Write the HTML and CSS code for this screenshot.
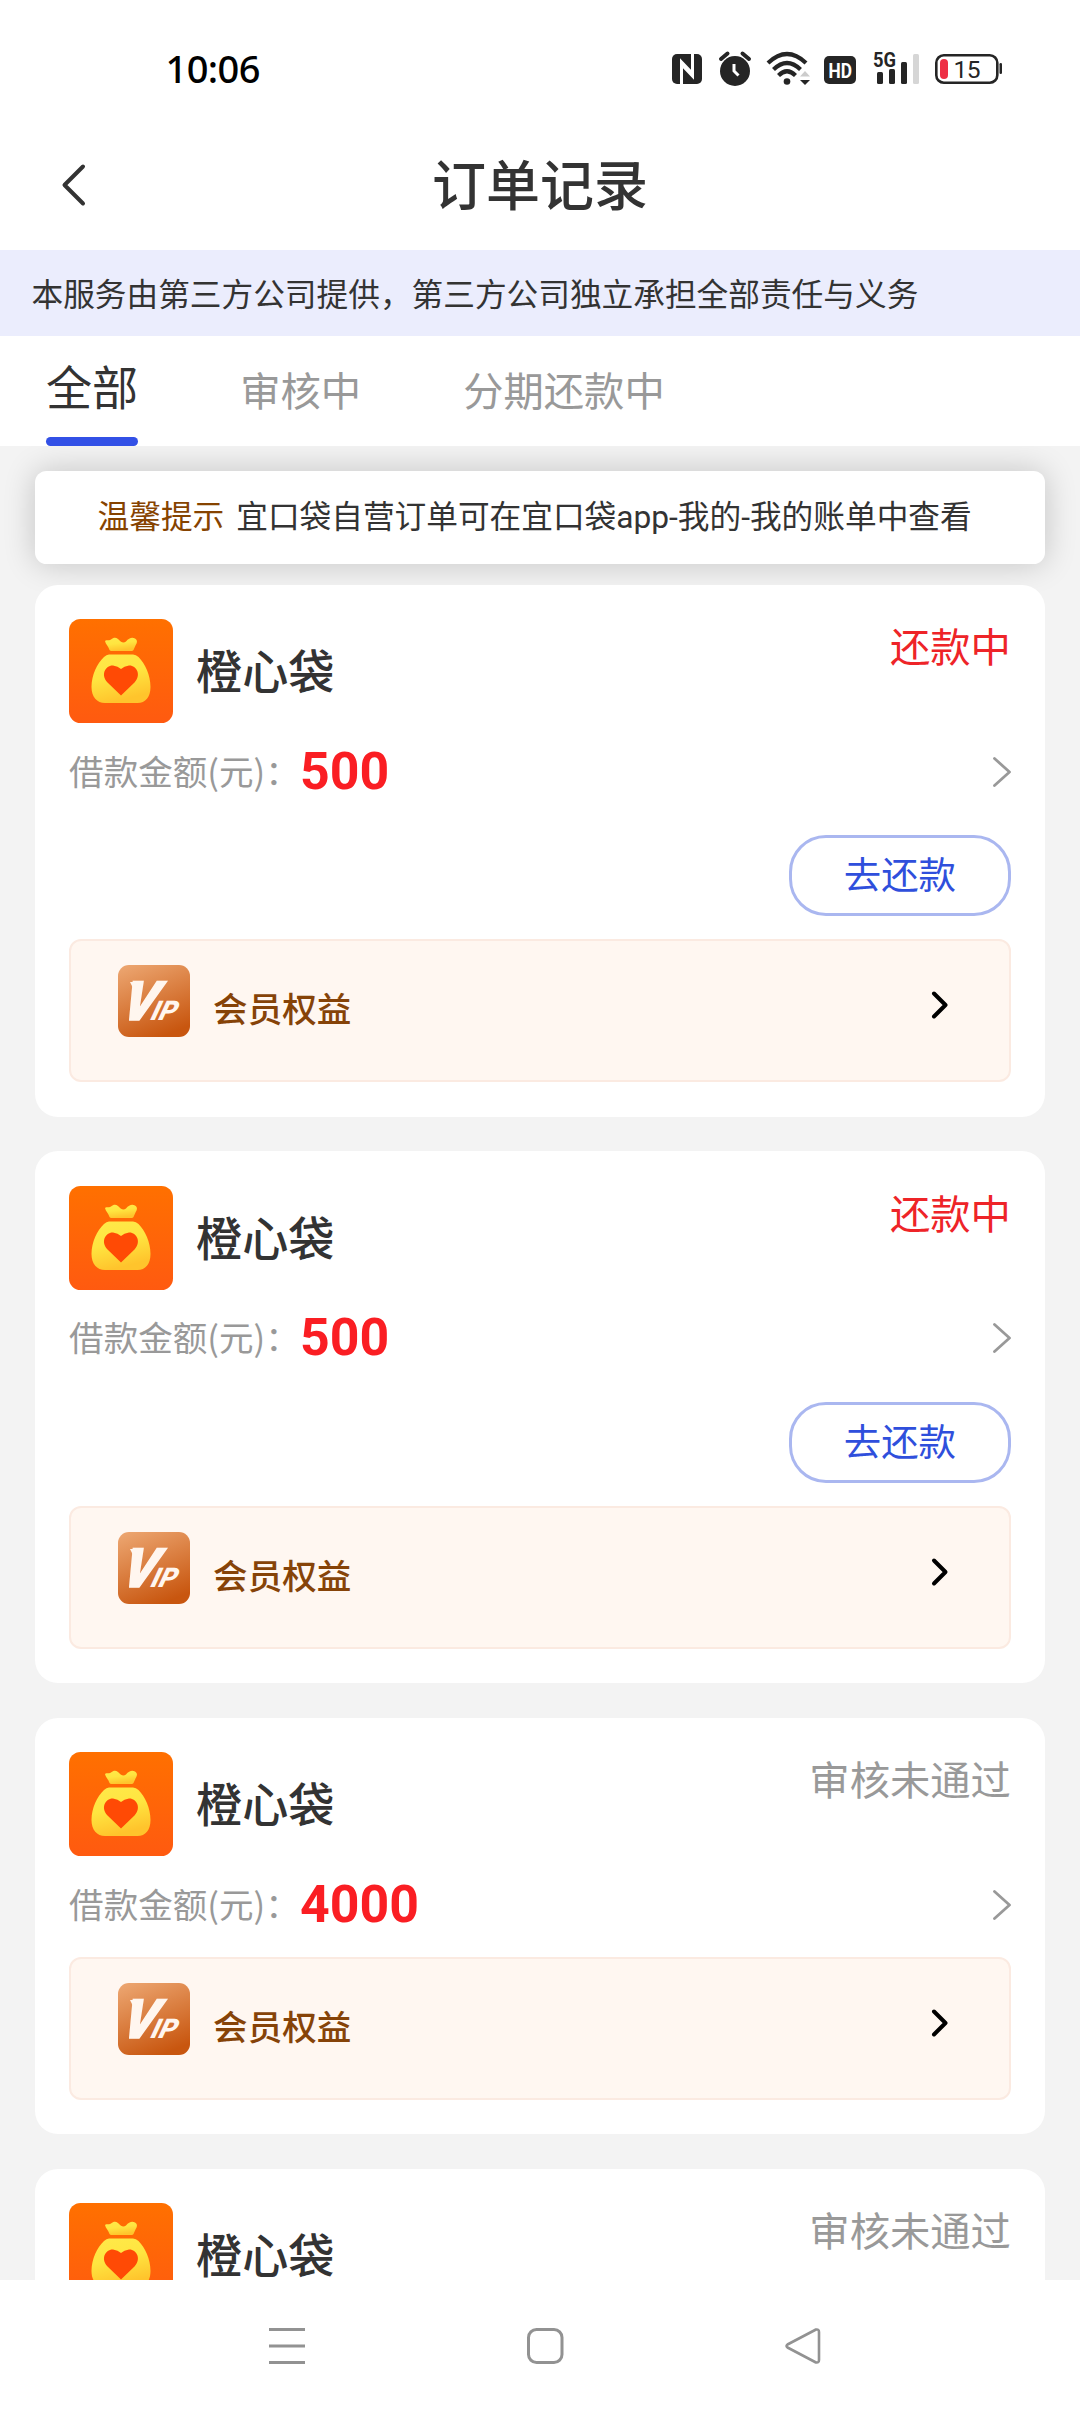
FILE: index.html
```html
<!DOCTYPE html>
<html lang="zh">
<head>
    <meta charset="UTF-8">
    <title>订单记录</title>
    <link rel="stylesheet" href="styles.css">
</head>
<body>
    <svg class="defs" width="0" height="0">
        <defs>
            <linearGradient id="orange" x1="0" y1="0" x2="0" y2="1">
                <stop offset="0" stop-color="#ff7000"/>
                <stop offset="1" stop-color="#ff5a10"/>
            </linearGradient>
            <linearGradient id="gold" x1="0" y1="0" x2="0.3" y2="1">
                <stop offset="0" stop-color="#ffe94a"/>
                <stop offset="0.5" stop-color="#ffe540"/>
                <stop offset="1" stop-color="#ffc42c"/>
            </linearGradient>
            <linearGradient id="bronze" x1="0.2" y1="0" x2="0.6" y2="1">
                <stop offset="0" stop-color="#eba36d"/>
                <stop offset="1" stop-color="#c8560f"/>
            </linearGradient>
        </defs>
        <symbol id="bag" viewBox="0 0 104 104">
            <rect width="104" height="104" rx="11.5" fill="url(#orange)"/>
            <path d="M36 22C38 20.500 39 22 42 20.500C44.500 18.500 46.500 18 49 20C51.500 22.500 54 25 57 22.500C60 19 63 18 66 19.500C69 21.500 68 24 66.500 26.500L64.500 31Q64 32 62.500 32H42.500Q41 32 40.500 31C39.500 27.500 36.500 25 36 22Z" fill="url(#gold)"/>
            <path d="M40 35.500H64Q67 35.500 69.500 38C76 44.500 81.500 56 81.500 68C81.500 78 76.500 84 68.500 84H36C28 84 22.500 78 22.500 68C22.500 56 28 44.500 35 38Q37.500 35.500 40 35.500Z" fill="url(#gold)"/>
            <path d="M52 76.500L38.500 63.500C31 55.500 37 46 44 46.500Q49 47 52 50Q55 47 60 46.500C67 46 73 55.500 65.500 63.500Z" fill="#ff4a05"/>
        </symbol>
        <symbol id="vip" viewBox="0 0 72 72">
            <rect width="72" height="72" rx="11" fill="url(#bronze)"/>
            <path d="M12 17H22V22H14.500Z" fill="#fff6ef"/>
            <text class="vip-v" transform="translate(0 55) skewX(-22)" textLength="33" lengthAdjust="spacingAndGlyphs">V</text>
            <text class="vip-ip" transform="translate(30.500 55) skewX(-25)" textLength="25" lengthAdjust="spacingAndGlyphs">IP</text>
        </symbol>
        <symbol id="more" viewBox="0 0 20 34">
            <path d="M3.500 3.500L18.500 17L3.500 30.500" fill="none" stroke="#999" stroke-width="2.800" stroke-linecap="round" stroke-linejoin="round"/>
        </symbol>
        <symbol id="enter" viewBox="0 0 20 30">
            <path d="M3 3.500L14.500 15L3 26.500" fill="none" stroke="#000" stroke-width="4" stroke-linecap="round" stroke-linejoin="round"/>
        </symbol>
    </svg>

    <div class="status-bar">
        <div class="time">10:06</div>
        <div class="status-icons">
            <svg class="nfc" width="30" height="36" viewBox="0 0 30 36">
                <rect y="4" width="30" height="30" rx="5" fill="#252525"/>
                <path d="M9.500 34V12L21 24" fill="none" stroke="#fff" stroke-width="3"/>
                <path d="M20.500 4V26L9 14" fill="none" stroke="#fff" stroke-width="3"/>
            </svg>
            <svg class="alarm" width="34" height="36" viewBox="0 0 34 36">
                <circle cx="17" cy="21" r="15" fill="#252525"/>
                <path d="M3 9L9.500 3.500M31 9L24.500 3.500" stroke="#252525" stroke-width="4" stroke-linecap="round"/>
                <path d="M16 14V21L20.500 25.500" fill="none" stroke="#fff" stroke-width="3"/>
            </svg>
            <svg class="wifi" width="46" height="36" viewBox="0 0 46 36">
                <g fill="none" stroke="#252525" stroke-width="4.200">
                    <path d="M2 13Q21 -5 40 13"/>
                    <path d="M7.500 19.500Q21 6.500 34.500 19.500"/>
                    <path d="M12.500 25.500Q21 17 29.500 25.500"/>
                </g>
                <circle cx="21" cy="31.500" r="3.300" fill="#252525"/>
                <path d="M34 26.500L39 21L44 26.500Z" fill="#ccc"/>
                <path d="M34 30L39 35L44 30Z" fill="#252525"/>
            </svg>
            <svg class="hd" width="32" height="36" viewBox="0 0 32 36">
                <rect y="6" width="32" height="28" rx="5" fill="#252525"/>
                <text class="hd-text" x="4.500" y="27.500" textLength="23.500" lengthAdjust="spacingAndGlyphs">HD</text>
            </svg>
            <svg class="signal" width="48" height="36" viewBox="0 0 48 36">
                <text class="net-text" x="0" y="17" textLength="23" lengthAdjust="spacingAndGlyphs">5G</text>
                <rect x="4" y="22" width="6" height="12" rx="1.500" fill="#252525"/>
                <rect x="16" y="19" width="6" height="15" rx="1.500" fill="#252525"/>
                <rect x="28" y="12" width="6" height="22" rx="1.500" fill="#252525"/>
                <rect x="40" y="4" width="6" height="30" rx="1.500" fill="#d6d6d6"/>
            </svg>
            <svg class="battery" width="68" height="36" viewBox="0 0 68 36">
                <rect x="1.300" y="5.300" width="61" height="27.400" rx="7.500" fill="none" stroke="#252525" stroke-width="2.600"/>
                <rect x="5" y="9" width="8" height="20" rx="4" fill="#ee2f45"/>
                <rect x="64.500" y="13" width="2.500" height="11" rx="1.200" fill="#252525"/>
                <text class="battery-text" x="18.500" y="27.500" textLength="27" lengthAdjust="spacing">15</text>
            </svg>
        </div>
    </div>

    <div class="header">
        <svg class="back" width="28" height="48" viewBox="0 0 28 48">
            <path d="M23 5.500L4.500 24L23 42.500" fill="none" stroke="#333" stroke-width="4" stroke-linecap="round" stroke-linejoin="round"/>
        </svg>
        <h1>订单记录</h1>
    </div>

    <div class="notice">本服务由第三方公司提供，第三方公司独立承担全部责任与义务</div>

    <div class="tabs">
        <div class="tab active">全部</div>
        <div class="tab">审核中</div>
        <div class="tab">分期还款中</div>
    </div>

    <div class="list">
        <div class="tip"><span class="tip-title">温馨提示</span><span>宜口袋自营订单可在宜口袋app-我的-我的账单中查看</span></div>

        <div class="card">
            <div class="card-head">
                <svg class="logo"><use href="#bag"/></svg>
                <div class="name">橙心袋</div>
                <div class="state repaying">还款中</div>
            </div>
            <div class="amount-row">
                <span class="label">借款金额(元)：</span>
                <span class="amount">500</span>
                <svg class="more"><use href="#more"/></svg>
            </div>
            <div class="actions"><button class="repay-btn">去还款</button></div>
            <div class="vip-row">
                <svg class="vip-icon"><use href="#vip"/></svg>
                <span class="vip-name">会员权益</span>
                <svg class="enter"><use href="#enter"/></svg>
            </div>
        </div>

        <div class="card">
            <div class="card-head">
                <svg class="logo"><use href="#bag"/></svg>
                <div class="name">橙心袋</div>
                <div class="state repaying">还款中</div>
            </div>
            <div class="amount-row">
                <span class="label">借款金额(元)：</span>
                <span class="amount">500</span>
                <svg class="more"><use href="#more"/></svg>
            </div>
            <div class="actions"><button class="repay-btn">去还款</button></div>
            <div class="vip-row">
                <svg class="vip-icon"><use href="#vip"/></svg>
                <span class="vip-name">会员权益</span>
                <svg class="enter"><use href="#enter"/></svg>
            </div>
        </div>

        <div class="card">
            <div class="card-head">
                <svg class="logo"><use href="#bag"/></svg>
                <div class="name">橙心袋</div>
                <div class="state">审核未通过</div>
            </div>
            <div class="amount-row">
                <span class="label">借款金额(元)：</span>
                <span class="amount">4000</span>
                <svg class="more"><use href="#more"/></svg>
            </div>
            <div class="vip-row">
                <svg class="vip-icon"><use href="#vip"/></svg>
                <span class="vip-name">会员权益</span>
                <svg class="enter"><use href="#enter"/></svg>
            </div>
        </div>

        <div class="card">
            <div class="card-head">
                <svg class="logo"><use href="#bag"/></svg>
                <div class="name">橙心袋</div>
                <div class="state">审核未通过</div>
            </div>
        </div>
    </div>

    <div class="nav-bar">
        <svg width="40" height="40" viewBox="0 0 40 40">
            <path d="M2 3.500H38M2 20H38M2 36.500H38" stroke="#929292" stroke-width="3.200"/>
        </svg>
        <svg width="40" height="40" viewBox="0 0 40 40">
            <rect x="3.500" y="3.500" width="33.500" height="33" rx="8" fill="none" stroke="#929292" stroke-width="3"/>
        </svg>
        <svg width="40" height="40" viewBox="0 0 40 40">
            <path d="M33 3.500L4.500 18.500Q2.500 20 4.500 21.500L33 36.500Q36 37 36 34V6Q36 3 33 3.500Z" fill="none" stroke="#929292" stroke-width="2.600" stroke-linejoin="round"/>
        </svg>
    </div>
</body>
</html>
```
FILE: styles.css
```css
* {
    box-sizing: border-box;
}
body {
    margin: 0;
    width: 1080px;
    height: 2412px;
    display: flex;
    flex-direction: column;
    overflow: hidden;
    font-family: "Noto Sans CJK SC", sans-serif;
    background: #fff;
    color: #333;
}
svg {
    display: block;
    flex-shrink: 0;
}
.defs {
    position: absolute;
}

/* 状态栏 */
.status-bar {
    height: 120px;
    flex-shrink: 0;
    display: flex;
    align-items: flex-start;
    justify-content: space-between;
    padding: 50px 77px 0 165.5px;
}
.time {
    font-family: "Noto Sans", sans-serif;
    font-size: 38px;
    font-weight: 500;
    line-height: 37px;
    letter-spacing: -0.6px;
    color: #000;
}
.status-icons {
    display: flex;
}
.alarm {
    margin-left: 16px;
}
.wifi {
    margin-left: 14px;
}
.hd {
    margin-left: 12px;
}
.signal {
    margin-left: 17px;
}
.battery {
    margin-left: 14px;
}
.hd-text {
    font: bold 21px Roboto, sans-serif;
    fill: #fff;
}
.net-text {
    font: bold 21px Roboto, sans-serif;
    fill: #252525;
}
.battery-text {
    font: 24.5px Roboto, sans-serif;
    fill: #252525;
}

/* 标题 */
.header {
    height: 130px;
    flex-shrink: 0;
    display: grid;
    grid-template-columns: 60px 1fr 60px;
    align-items: center;
    padding: 0 60px;
}
.header h1 {
    margin: 0;
    padding-bottom: 5px;
    text-align: center;
    font-size: 54px;
    font-weight: 500;
    line-height: 70px;
}
.notice {
    height: 86px;
    flex-shrink: 0;
    padding-left: 31.5px;
    background: #ebedfd;
    font-size: 31.68px;
    line-height: 84px;
    white-space: nowrap;
}

/* 标签 */
.tabs {
    height: 110px;
    flex-shrink: 0;
    display: flex;
    gap: 102px;
    padding-left: 46px;
}
.tab {
    height: 110px;
    font-size: 40.32px;
    line-height: 105px;
    color: #999;
}
.tab.active {
    font-size: 46.08px;
    line-height: 99px;
    color: #333;
    display: flex;
    flex-direction: column;
}
.tab.active::after {
    content: "";
    height: 9px;
    margin-top: 2px;
    border-radius: 4.5px;
    background: #3250e6;
}

/* 订单列表 */
.list {
    flex: 1;
    min-height: 0;
    overflow: hidden;
    padding: 24.7px 34.56px 0;
    background: #f3f3f3;
}
.tip {
    height: 93.5px;
    display: flex;
    padding-left: 63px;
    border-radius: 11.5px;
    background: #fff;
    box-shadow: 0 0 32px rgba(0,0,0,0.2);
    font-family: Roboto, "Noto Sans CJK SC", sans-serif;
    font-size: 31.68px;
    line-height: 93px;
    white-space: nowrap;
}
.tip-title {
    margin-right: 12px;
    color: #864300;
}
.card {
    margin-top: 34.56px;
    padding: 34.56px;
    border-radius: 23px;
    background: #fff;
}
.tip + .card {
    margin-top: 20.6px;
}
.card-head {
    height: 103.68px;
    display: flex;
}
.logo {
    width: 104px;
    height: 104px;
}
.name {
    margin-left: 23px;
    font-size: 46.08px;
    font-weight: 500;
    line-height: 101px;
}
.state {
    margin-left: auto;
    font-size: 40.32px;
    line-height: 51px;
    color: #999;
}
.state.repaying {
    color: #ee2428;
}
.amount-row {
    height: 97.4px;
    display: flex;
    align-items: center;
}
.label {
    width: 231px;
    padding-bottom: 4px;
    font-size: 34.56px;
    color: #999;
    white-space: nowrap;
}
.amount {
    font-family: Roboto, sans-serif;
    font-size: 51.84px;
    font-weight: 700;
    line-height: 60px;
    color: #fa1e23;
}
.more {
    width: 20px;
    height: 34px;
    margin-left: auto;
}
.actions {
    display: flex;
    justify-content: flex-end;
    margin: 14.8px 0 23px;
}
.repay-btn {
    width: 222px;
    height: 81px;
    padding: 0 0 5px;
    border: 3px solid #aab7f0;
    border-radius: 37px;
    background: #fff;
    font-family: inherit;
    font-size: 37.44px;
    color: #2f4fdc;
}
.vip-row {
    height: 143px;
    margin-top: 3.3px;
    display: flex;
    align-items: flex-start;
    padding: 24px 58px 0 47px;
    border: 2px solid #fbeae1;
    border-radius: 12px;
    background: #fff7f1;
}
.vip-icon {
    width: 72px;
    height: 72px;
}
.vip-v {
    font: 900 54px Roboto, sans-serif;
    fill: #fff6ef;
    stroke: #fff6ef;
    stroke-width: 1.6px;
}
.vip-ip {
    font: 900 27px Roboto, sans-serif;
    fill: #fff6ef;
}
.vip-name {
    margin-left: 23px;
    font-size: 34.56px;
    font-weight: 500;
    line-height: 84px;
    color: #864308;
}
.enter {
    width: 20px;
    height: 30px;
    margin: 25px 0 0 auto;
}

/* 系统导航 */
.nav-bar {
    height: 132px;
    flex-shrink: 0;
    display: flex;
    align-items: center;
    gap: 218px;
    padding-left: 267px;
    background: #fff;
}
```
